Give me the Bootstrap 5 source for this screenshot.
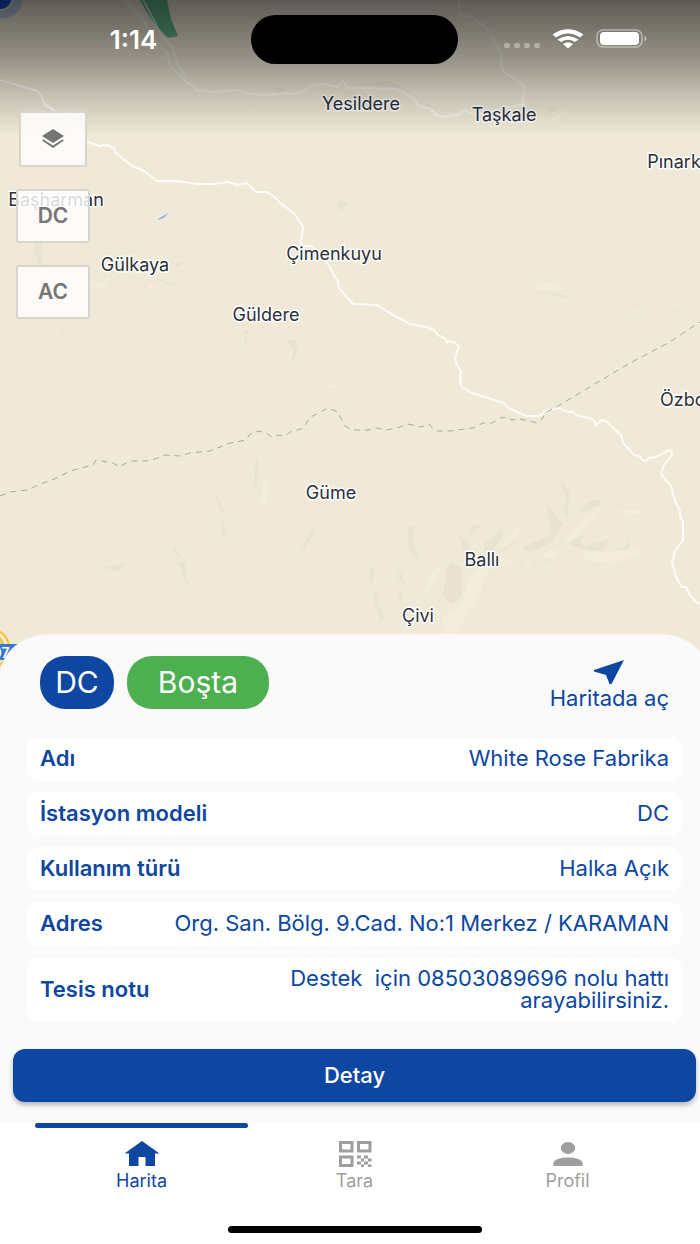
<!DOCTYPE html>
<html lang="tr">
<head>
<meta charset="utf-8">
<meta name="viewport" content="width=device-width, initial-scale=1">
<title>Harita</title>
<link href="https://cdn.jsdelivr.net/npm/bootstrap@5.3.0/dist/css/bootstrap.min.css" rel="stylesheet">
<style>
  :root { --brand: #0d47a1; --free: #4caf50; --muted: #9e9e9e; --paper: #fafafa; }
  body { font-family: Inter, "Liberation Sans", sans-serif; background: #fff; color: var(--brand); }
  .app-shell { overflow: hidden; }
  .app-wide { margin-right: -9px; }
  .map-area { background: #f0e9d7; min-height: 400px; margin-bottom: -44px; }
  .map-canvas { inset: 0; }
  .map-canvas text { font-size: 18px; fill: #2c2f36; stroke: #fff; stroke-width: 3px; stroke-linejoin: round; paint-order: stroke; text-anchor: middle; }
  .map-canvas .shield-text { font-size: 14px; font-weight: 600; fill: #fff; stroke: none; }
  .map-canvas .dark-patch { fill: #e9e2d0; }
  .map-canvas .light-patch { fill: #f4eddb; }
  .status-bar { top: 0; left: 0; right: -9px; height: 136px; padding-top: 15px;
    background: linear-gradient(rgba(0,0,0,.61), rgba(0,0,0,.37) 44%, rgba(0,0,0,.15) 74%, rgba(0,0,0,0)); }
  .island { width: 207px; height: 49px; border-radius: 25px; background: #000; }
  .clock { font-size: 26px; line-height: 49px; padding-left: 16px; font-weight: 600; }
  .status-icons { padding-right: 16px; height: 49px; }
  .map-tools { top: 111px; left: 16px; gap: 22px; }
  .map-tool { width: 74px; height: 54px; font-size: 21px; font-weight: 600; color: #757575; background: rgba(255,255,255,.82); border: 2px solid #d7d5cf; border-radius: 3px; }
  .map-tool-layers { width: 68px; height: 56px; }
  .sheet { background: var(--paper); border-radius: 50px 50px 0 0 / 42px 42px 0 0; padding: 22px 13px 21px; }
  .sheet-head { padding: 0 27px; height: 53px; }
  .tags { gap: 13px; }
  .tag { height: 53px; border-radius: 25px; font-size: 30px; color: #fff; }
  .tag-type { width: 74px; background: var(--brand); }
  .tag-state { width: 142px; background: var(--free); }
  .open-map { color: var(--brand); font-size: 22px; line-height: 22px; gap: 2px; padding-top: 4px; }
  .facts { padding: 28px 14px 26px; gap: 11px; }
  .fact { background: #fff; border-radius: 12px; padding: 10px 13px 12px; font-size: 22px; line-height: 22px; }
  .fact dt { font-weight: 600; }
  .fact dd { white-space: pre-wrap; max-width: 520px; }
  .btn-detail { height: 53px; border-radius: 12px; background: var(--brand); color: #fff; font-size: 22px; font-weight: 500; box-shadow: 0 3px 5px rgba(0,0,0,.28); }
  .btn-detail:hover { background: #0b3d8c; color: #fff; }
  .tabs { background: #fff; padding: 0 35px; }
  .tab { color: var(--muted); font-size: 18px; line-height: 22px; border-top: 5px solid transparent; padding-top: 10px; gap: 2px; }
  .tab-on { color: var(--brand); }
  .tab-mark { top: -5px; left: 0; right: 0; height: 5px; border-radius: 3px; background: var(--brand); }
  .home-bar { width: 254px; height: 7px; border-radius: 4px; background: #000; margin: 34px auto 11px; }
</style>
</head>
<body>
<div class="app-shell d-flex flex-column min-vh-100">
  <main class="map-area position-relative flex-grow-1">
    <svg class="map-canvas position-absolute w-100 h-100" viewBox="0 0 700 678" preserveAspectRatio="xMidYMid slice" role="img" aria-label="Karaman çevresi haritası">
      <!-- terrain shading -->
      <g class="dark-patch">
        <path d="M334 206l7-6 7 3-5 7zM172 264l12-3-4 6zM152 276l24 9-10-1zM36 238l-3 12 6 16 4-1-3-28zM288 340h8l1 13-6 11 2-12zM244 330h4l-2 18zM543 292l24 3-4 3zM543 107h16l-8 7zM272 87l16 2-10 4zM351 84l40-3 22 12-19-6zM425 103l13 6-12-3z"/>
        <path d="M256 459l3 5-3 27-2-8zM215 491l8 19 6 9-9-10zM223 520l3 15-5 2zM301 553l5-14 8-14-1 10zM103 567l24-4-8 9zM174 546l11 16-12-10zM178 562h7l3 27z"/>
        <path d="M560 481l9 9-1 29-5-8 3-12zM547 504l16 20-13 20-22 8-6-5 29-12zM580 510l7-8 13-3 1 6-22 8zM408 527h6l-1 14 7 21-12-12zM459 535l10 8 2 11-8-4zM471 525h12l-9 5-4 6zM485 543l18-15v8l-10 14-10 2zM502 550l18-12-16 14zM566 543l18-8-4 7 5 8zM582 547l26-8-5 12-18-1zM620 552l10-12-1 10zM371 566l3 6-2 13-3-8zM372 592l6-2-1 14 9 12-6 5zM402 571l-3 9 6 5zM399 590l5 2-4 13zM446 571l4-9 12 6v28l-10 8-9-9z"/>
      </g>
      <g class="light-patch">
        <path d="M90 288l21-11-8 10zM148 284l13 3-13 2zM536 284l15-2 14 7-31 1zM628 309l17 3-16 2zM664 308l8-4 9 1zM325 388l4-4 12 3zM549 121l15-11-6 10zM264 480l5 8-3 15-7 4 3-14zM57 330h4l-4 8z"/>
        <path d="M570 535l13-15 18-10-9 10-20 20-13 13zM615 510h28v4l-18 1zM500 546l20-23-1 10-17 15zM543 553l17-4-5 10-12-1zM583 553l60-4-2 6-27 8-28-2zM524 564h8l-4 7zM545 566l8-1-1 7zM421 598l8-21 10-12 3 5-14 20zM390 580l6-18-3 20zM442 617l21-17 4-19 15-20 16-3 17 2-28 12-8 24-9 14-16 24h-8z"/>
      </g>
      <!-- park -->
      <path d="M140 0h27l4 19 7 17-10 2q-16-14-28-38" fill="#63b78c"/>
      <!-- roads -->
      <g fill="none" stroke="#fdfcf8" stroke-width="2" stroke-linejoin="round">
        <path d="M0 80L37 91 41 95 45 105 53 109 60 117 71 124 80 135 88 142 99 146 107 145 115 149 115 152 132 166 144 171 157 181 175 181 198 184 214 184 228 182 237 185 247 183 256 192 267 192 276 198 280 203 294 213 303 227 302 237 300 241 303 246 311 246 318 251 325 260 331 269 335 277 338 281 339 288 353 304 377 305 393 315 410 324 426 327 434 330 438 335 446 339 447 343 449 341 455 343 459 346 455 358 457 365 461 371 460 382 462 387 472 393 501 402 505 404 508 408 526 416 540 416 545 411 560 408 565 411 573 412 578 416 586 417 594 420 596 426 601 420 606 421 621 435 623 443 634 455 640 456 642 460 646 461 649 458 656 457 669 450 672 452 672 455 664 465 661 474 671 486 675 501 680 511 680 516 683 522 683 540 675 551 672 562 676 577 682 587 686 587 690 595 696 602 702 605"/>
        <path stroke-opacity=".65" d="M125 0L145 22 154 38 167 53 170 65 183 79 197 90 208 92 242 90 246 93 263 95 288 93 294 94 303 91 310 86 325 84 337 87 343 81 347 88 397 89 405 93 415 100 418 105 431 109 436 115 444 117 459 114 465 110 473 114 490 112 510 107 524 104 523 98 525 90 523 84 505 73 502 68 501 52 491 35 485 27 473 18 461 14 459 12V0M143 0L155 22 161 35 172 47 178 65 186 78"/>
      </g>
      <path d="M158 219l10-6q-2 5-10 7" fill="#8ab4f8"/>
      <!-- province border -->
      <path d="M0 496L10 492 28 490 38 485 57 478 70 471 93 465 96 460 113 463 119 467 130 461 146 461 155 459 165 455 180 456 190 453 210 451 230 443 246 440 250 434 259 431 268 434 271 437 276 435 285 436 290 432 304 428 309 418 328 408 338 412 345 426 352 430 368 430 376 428 387 430 400 427 408 424 421 427 429 424 435 431 450 431 473 428 483 423 492 423 500 418 509 417 511 420 520 419 538 423 543 418 545 413 558 406 630 363 668 343 700 322" fill="none" stroke="#aaa597" stroke-width="1" stroke-dasharray="6 5"/>
      <!-- station marker and road shield at the edges -->
      <circle cx="3" cy="-2" r="20" fill="#7aa3e8" opacity=".45"/>
      <circle cx="0" cy="-3" r="13" fill="#1554cf" stroke="#dfe6f2" stroke-width="2"/>
      <circle cx="-10" cy="648" r="19" fill="#f4efdc" stroke="#fbc02d" stroke-width="2"/>
      <circle cx="-10" cy="648" r="14" fill="#b9d8bd" stroke="#fbc02d" stroke-width="2"/>
      <path d="M0 644h18v16H0z" fill="#3b78c9"/>
      <text x="361" y="110">Yesildere</text>
      <text x="504" y="121">Taşkale</text>
      <text x="689" y="168">Pınarkaya</text>
      <text x="56" y="206">Başharman</text>
      <text x="334" y="260">Çimenkuyu</text>
      <text x="135" y="271">Gülkaya</text>
      <text x="266" y="321">Güldere</text>
      <text x="693" y="406">Özboyu</text>
      <text x="331" y="499">Güme</text>
      <text x="482" y="566">Ballı</text>
      <text x="418" y="622">Çivi</text>
      <text x="1" y="658" class="shield-text">07</text>
    </svg>

    <header class="status-bar position-absolute d-flex align-items-start">
      <div class="clock flex-fill text-center text-white w-25">1:14</div>
      <div class="island flex-shrink-0"></div>
      <div class="status-icons flex-fill d-flex align-items-center justify-content-center w-25">
        <svg width="146" height="24" viewBox="0 0 146 24" aria-hidden="true">
          <g fill="#fff" fill-opacity=".35"><rect x="1" y="15" width="6" height="5" rx="2"/><rect x="11" y="15" width="6" height="5" rx="2"/><rect x="21" y="15" width="6" height="5" rx="2"/><rect x="31" y="15" width="6" height="5" rx="2"/></g>
          <path fill="#fff" d="M49.500 6.500Q65-4 80.500 6.500L77 9.500Q65 1.500 53 9.500zM54.500 11.500Q65 4.500 75.500 11.500L72 14Q65 9.500 58 14zM60 16q5-3.500 10 0l-5 4.500z"/>
          <rect x="94" y="2" width="45" height="17" rx="6" fill="none" stroke="#fff" stroke-opacity=".45" stroke-width="1.500"/>
          <rect x="97" y="4" width="39" height="13" rx="4" fill="#fff"/>
          <path d="M141.500 7.500q4 3 0 6z" fill="#fff" fill-opacity=".5"/>
        </svg>
      </div>
    </header>

    <div class="map-tools position-absolute d-flex flex-column align-items-center">
      <button type="button" class="map-tool map-tool-layers p-0 d-flex align-items-center justify-content-center" aria-label="Katmanlar">
        <svg width="22" height="20" viewBox="0 0 22 20" fill="#757575" aria-hidden="true"><path d="M11 0l11 7-11 7L0 7z"/><path d="M0 11.500l1.500-1L11 16.500l9.500-6 1.500 1L11 19z"/></svg>
      </button>
      <button type="button" class="map-tool p-0">DC</button>
      <button type="button" class="map-tool p-0">AC</button>
    </div>
  </main>

  <section class="sheet app-wide position-relative">
    <div class="sheet-head d-flex align-items-center justify-content-between">
      <div class="tags d-flex">
        <span class="tag tag-type d-flex align-items-center justify-content-center">DC</span>
        <span class="tag tag-state d-flex align-items-center justify-content-center">Boşta</span>
      </div>
      <a href="#harita" class="open-map d-flex flex-column align-items-center text-decoration-none">
        <svg width="30" height="25" viewBox="0 0 30 25" fill="currentColor" aria-hidden="true"><path d="M30 0L17.500 24h-2L12 15 0 11.500V10z"/></svg>
        Haritada aç
      </a>
    </div>
    <dl class="facts d-flex flex-column mb-0">
      <div class="fact d-flex align-items-center justify-content-between"><dt>Adı</dt><dd class="mb-0 text-end">White Rose Fabrika</dd></div>
      <div class="fact d-flex align-items-center justify-content-between"><dt>İstasyon modeli</dt><dd class="mb-0 text-end">DC</dd></div>
      <div class="fact d-flex align-items-center justify-content-between"><dt>Kullanım türü</dt><dd class="mb-0 text-end">Halka Açık</dd></div>
      <div class="fact d-flex align-items-center justify-content-between"><dt>Adres</dt><dd class="mb-0 text-end">Org. San. Bölg. 9.Cad. No:1 Merkez / KARAMAN</dd></div>
      <div class="fact d-flex align-items-center justify-content-between"><dt>Tesis notu</dt><dd class="mb-0 text-end">Destek  için 08503089696 nolu hattı
arayabilirsiniz.</dd></div>
    </dl>
    <button type="button" class="btn btn-detail w-100 py-0">Detay</button>
  </section>

  <footer class="app-wide">
    <nav class="tabs row g-0 text-center">
      <a href="#harita" class="tab tab-on col position-relative d-flex flex-column align-items-center text-decoration-none" aria-current="page">
        <span class="tab-mark position-absolute"></span>
        <svg width="36" height="30" viewBox="0 0 36 30" fill="currentColor" aria-hidden="true"><path d="M18 3l17.500 12.500H31V28h-9.500v-9h-7v9H5V15.500H.5z"/></svg>
        Harita
      </a>
      <a href="#tara" class="tab col d-flex flex-column align-items-center text-decoration-none">
        <svg width="36" height="30" viewBox="0 0 36 30" aria-hidden="true">
          <g fill="none" stroke="currentColor" stroke-width="3"><path d="M3.500 4.500h11.500v8.500H3.500zM21.500 4.500H33v8.500H21.500zM3.500 19h11.500v8.500H3.500z"/></g>
          <path fill="currentColor" d="M20 17.500h4v3h-4zM27 17.500h4v3h-4zM24 20.500h3v3h-3zM31 20.500h3.500v3H31zM20 23.500h4v3h-4zM27 23.500h4v3h-4zM24 26.500h3V29h-3zM31 26.500h3.500V29H31z"/>
        </svg>
        Tara
      </a>
      <a href="#profil" class="tab col d-flex flex-column align-items-center text-decoration-none">
        <svg width="36" height="30" viewBox="0 0 36 30" fill="currentColor" aria-hidden="true"><ellipse cx="18" cy="10" rx="7.200" ry="6"/><path d="M3.500 28v-3c0-4 9-5.500 14.500-5.500S32.500 21 32.500 25v3z"/></svg>
        Profil
      </a>
    </nav>
    <div class="home-bar"></div>
  </footer>
</div>
<script src="https://cdn.jsdelivr.net/npm/bootstrap@5.3.0/dist/js/bootstrap.bundle.min.js"></script>
</body>
</html>
